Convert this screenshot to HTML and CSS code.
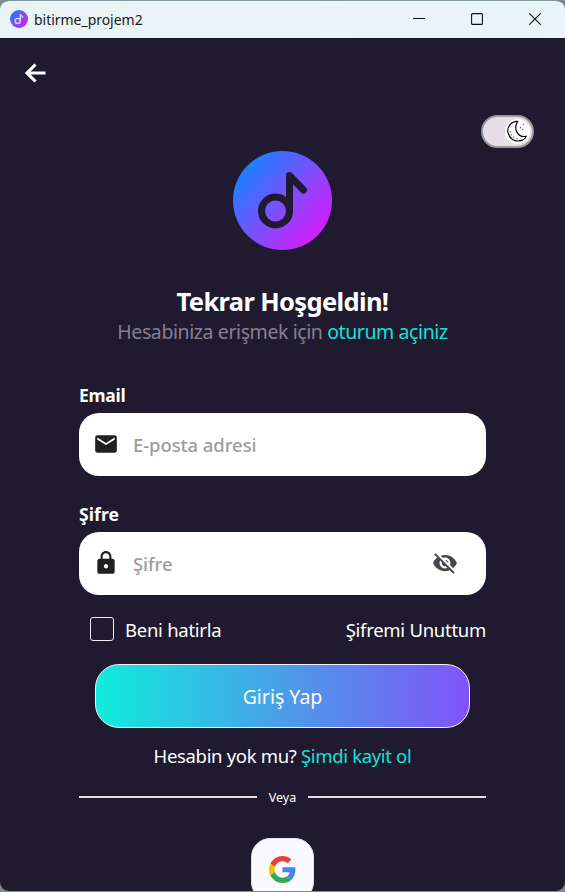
FILE: index.html
```html
<!DOCTYPE html>
<html lang="tr">
<head>
<meta charset="utf-8">
<title>bitirme_projem2</title>
<link rel="stylesheet" href="styles.css">
</head>
<body>
<div class="window">
  <header class="titlebar">
    <svg class="app-icon" viewBox="0 0 99 99"><defs><linearGradient id="g1" x1="0.1" y1="0.15" x2="0.9" y2="0.85"><stop offset="0" stop-color="#1c7dff"/><stop offset="1" stop-color="#d81bfb"/></linearGradient></defs><circle cx="49.500" cy="49.500" r="49.500" fill="url(#g1)"/><g fill="none" stroke="#d9d5ff" stroke-width="8" stroke-linecap="round" stroke-linejoin="round"><circle cx="42.500" cy="60" r="14"/><path d="M56.500 60V24.500L70.500 39"/></g></svg>
    <span class="app-name">bitirme_projem2</span>
    <nav class="controls">
      <svg viewBox="0 0 12 12"><path d="M0 5.500H12"/></svg>
      <svg viewBox="0 0 12 12"><rect x="0.600" y="0.600" width="10.800" height="10.800" rx="1"/></svg>
      <svg viewBox="0 0 12 12"><path d="M0.300 0.300L11.700 11.700M11.700 0.300L0.300 11.700"/></svg>
    </nav>
  </header>
  <main class="page">
    <svg class="back" viewBox="0 0 22 22"><path d="M20.500 11H2.500M10.500 2.500L2 11L10.500 19.500"/></svg>
    <div class="toggle">
      <div class="knob">
        <svg viewBox="0 0 24 24"><path d="M12 1.500C5 1.500 1 7 2 13C3.500 19.500 9 23 15 21.500C18 20.700 20.500 19 21 17C13.500 18.500 7 11 12 1.500Z"/><path class="dots" d="M4.500 12v1M5.500 15v1M8 17.500v1M11 19.500h1M17.500 4.500h1M14.500 8h1M16.500 10h1"/></svg>
      </div>
    </div>
    <svg class="logo" viewBox="0 0 99 99"><defs><linearGradient id="g2" x1="0.1" y1="0.15" x2="0.9" y2="0.85"><stop offset="0" stop-color="#1683ff"/><stop offset="0.500" stop-color="#7a50ff"/><stop offset="1" stop-color="#d81bfb"/></linearGradient></defs><circle cx="49.500" cy="49.500" r="49.500" fill="url(#g2)"/><g fill="none" stroke="#201a30" stroke-width="7" stroke-linecap="round" stroke-linejoin="round"><circle cx="42.500" cy="60" r="14"/><path d="M56.500 60V24.500L70.500 39"/></g></svg>
    <h1>Tekrar Hoşgeldin!</h1>
    <p class="subtitle">Hesabiniza erişmek için <span class="accent">oturum açiniz</span></p>
    <form class="form">
      <label class="label">Email</label>
      <div class="field">
        <svg class="lead" viewBox="0 0 24 24"><path d="M20 4H4c-1.100 0-1.990.9-1.990 2L2 18c0 1.100.9 2 2 2h16c1.100 0 2-.9 2-2V6c0-1.100-.9-2-2-2zm0 4l-8 5-8-5V6l8 5 8-5v2z"/></svg>
        <span class="placeholder">E-posta adresi</span>
      </div>
      <label class="label second">Şifre</label>
      <div class="field">
        <svg class="lead" viewBox="0 0 24 24"><path d="M18 8h-1V6c0-2.760-2.240-5-5-5S7 3.240 7 6v2H6c-1.100 0-2 .9-2 2v10c0 1.100.9 2 2 2h12c1.100 0 2-.9 2-2V10c0-1.100-.9-2-2-2zm-6 9c-1.100 0-2-.9-2-2s.9-2 2-2 2 .9 2 2-.9 2-2 2zm3.100-9H8.900V6c0-1.710 1.390-3.100 3.100-3.100 1.710 0 3.100 1.390 3.100 3.100v2z"/></svg>
        <span class="placeholder">Şifre</span>
        <svg class="eye" viewBox="0 0 24 24"><path d="M12 7c2.760 0 5 2.240 5 5 0 .65-.13 1.260-.36 1.830l2.920 2.920c1.510-1.260 2.700-2.890 3.430-4.750-1.730-4.390-6-7.500-11-7.500-1.400 0-2.740.25-3.980.7l2.160 2.160C10.740 7.130 11.350 7 12 7zM2 4.270l2.280 2.280.46.46C3.080 8.300 1.780 10.020 1 12c1.730 4.390 6 7.500 11 7.500 1.550 0 3.030-.3 4.380-.84l.42.42L19.730 22 21 20.730 3.270 3 2 4.270zM7.530 9.800l1.550 1.550c-.05.21-.08.43-.08.65 0 1.660 1.340 3 3 3 .22 0 .44-.03.65-.08l1.550 1.550c-.67.33-1.410.53-2.200.53-2.760 0-5-2.240-5-5 0-.79.2-1.530.53-2.200zm4.310-.78l3.150 3.150.02-.16c0-1.660-1.340-3-3-3l-.17.01z"/></svg>
      </div>
      <div class="options">
        <span class="checkbox"></span>
        <span>Beni hatirla</span>
        <span class="forgot">Şifremi Unuttum</span>
      </div>
      <div class="submit">Giriş Yap</div>
      <p class="signup">Hesabin yok mu? <span class="accent">Şimdi kayit ol</span></p>
      <div class="divider"><i></i><span>Veya</span><i></i></div>
    </form>
    <div class="google">
      <svg viewBox="0 0 48 48"><path fill="#ea4335" d="M24 9.500c3.540 0 6.710 1.220 9.210 3.600l6.850-6.850C35.900 2.380 30.470 0 24 0 14.620 0 6.510 5.380 2.560 13.220l7.980 6.190C12.430 13.720 17.740 9.500 24 9.500z"/><path fill="#4285f4" d="M46.980 24.550c0-1.570-.15-3.090-.38-4.550H24v9.020h12.940c-.58 2.960-2.260 5.480-4.780 7.180l7.730 6c4.510-4.180 7.090-10.360 7.090-17.650z"/><path fill="#fbbc05" d="M10.530 28.590c-.48-1.450-.76-2.990-.76-4.590s.27-3.140.76-4.590l-7.980-6.190C.92 16.460 0 20.120 0 24c0 3.880.92 7.540 2.560 10.780l7.970-6.190z"/><path fill="#34a853" d="M24 48c6.480 0 11.930-2.130 15.890-5.810l-7.730-6c-2.150 1.450-4.920 2.300-8.160 2.300-6.260 0-11.570-4.220-13.470-9.910l-7.980 6.190C6.510 42.620 14.620 48 24 48z"/></svg>
    </div>
  </main>
</div>
</body>
</html>
```
FILE: styles.css
```css
* { box-sizing: border-box; }
body {
  margin: 0;
  height: 892px;
  overflow: hidden;
  background: #7d8a8e;
  font-family: "Noto Sans", "Open Sans", sans-serif;
  color: #fff;
}
svg { display: block; flex: none; }
.window {
  height: 891px;
  border-top: 1px solid #82969d;
  border-radius: 9px;
  overflow: hidden;
  background: #201a30;
}
.titlebar {
  height: 37px;
  display: flex;
  align-items: center;
  padding: 0 24px 0 10px;
  background: linear-gradient(90deg, #eaf4f7, #ebf4f8 60%, #e9f5f7);
  color: #191919;
  font-size: 14px;
}
.app-icon { width: 18px; height: 18px; margin-top: -1px; }
.app-name { margin-left: 6px; letter-spacing: -0.030px; }
.controls { display: flex; gap: 46px; margin: -1px 0 0 auto; }
.controls svg { width: 12px; height: 12px; fill: none; stroke: #111; stroke-width: 1.1; }
.page { display: flex; flex-direction: column; align-items: center; }
.back {
  width: 22px;
  height: 22px;
  align-self: flex-start;
  margin: 24px 0 0 24.500px;
  fill: none;
  stroke: #fff;
  stroke-width: 3.1;
}
.toggle {
  align-self: flex-end;
  width: 53px;
  height: 33px;
  margin: 31px 31px 0 0;
  border: 2.500px solid #9a989d;
  border-radius: 17px;
  background: #e7deea;
  display: flex;
  justify-content: flex-end;
  align-items: center;
  padding-right: 2px;
}
.knob { width: 25px; height: 25px; border-radius: 50%; background: #fff; display: flex; align-items: center; justify-content: center; }
.knob svg { width: 23px; height: 23px; fill: none; stroke: #000; stroke-width: 1.2; }
.knob .dots { stroke-width: 1; }
.logo { width: 99px; height: 99px; margin-top: 3px; }
h1, p { margin: 0; white-space: nowrap; }
h1 { margin-top: 34px; height: 34px; line-height: 34px; font-size: 25.500px; font-weight: 700; letter-spacing: -0.650px; }
.subtitle { height: 28px; line-height: 28px; font-size: 19.500px; letter-spacing: -0.410px; color: #85808f; }
.accent { color: #13e3d3; }
.form { width: 407px; margin-top: 37px; }
.label { display: block; height: 30px; line-height: 24px; font-size: 17.500px; font-weight: 700; letter-spacing: -0.250px; }
.second { margin-top: 26px; letter-spacing: 0.100px; }
.field {
  height: 63px;
  border-radius: 20px;
  background: #fff;
  display: flex;
  align-items: center;
  padding: 0 28px 1px 14px;
  font-size: 18.500px;
  font-weight: 500;
  letter-spacing: -0.080px;
  color: #9c9c9c;
}
.lead { width: 26px; height: 26px; fill: #202020; }
.placeholder { margin-left: 14px; }
.eye { width: 26px; height: 26px; margin-left: auto; fill: #49454f; }
.options { height: 26px; margin: 21px 0 0 11px; display: flex; align-items: center; font-size: 18.500px; letter-spacing: -0.270px; white-space: nowrap; }
.checkbox { width: 24px; height: 24px; margin-right: 11px; border: 1.500px solid #efedf2; border-radius: 3px; }
.forgot { margin-left: auto; }
.submit {
  height: 64px;
  margin: 22px 16px 0;
  border: 1.500px solid #f3f3ff;
  border-radius: 24px;
  background: linear-gradient(90deg, #11ecdc, #4a9ee9 50%, #8153f8);
  display: flex;
  align-items: center;
  justify-content: center;
  font-size: 19.500px;
}
.signup { height: 28px; line-height: 28px; margin-top: 14px; text-align: center; font-size: 18.500px; letter-spacing: -0.330px; }
.divider { height: 20px; margin-top: 17px; display: flex; align-items: center; justify-content: space-between; font-size: 12.500px; }
.divider i { width: 178px; height: 1.500px; background: #e2dde5; }
.google {
  width: 63px;
  height: 63px;
  margin-top: 31px;
  border: 1px solid #e3e0f5;
  border-radius: 19px;
  background: #f9f9ff;
  display: flex;
  align-items: center;
  justify-content: center;
}
.google svg { width: 27px; height: 27px; }
```
